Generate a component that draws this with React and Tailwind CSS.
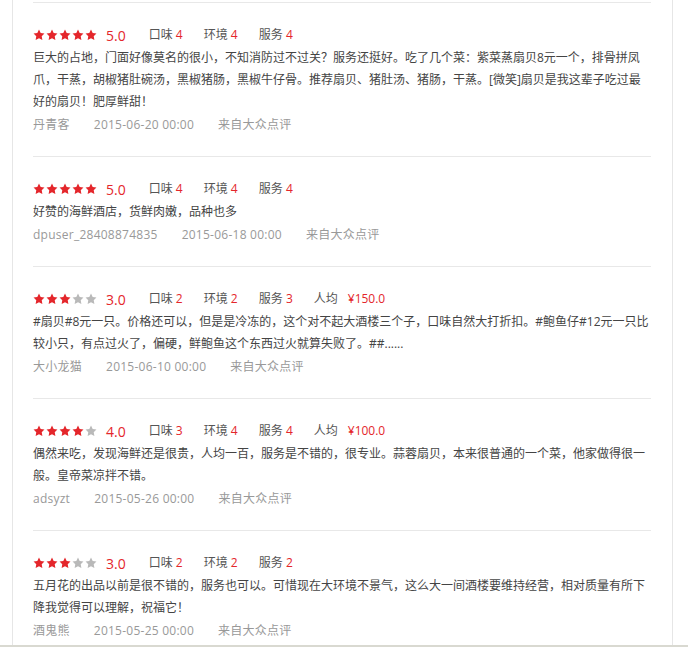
import React from "react";

const reviews = [
  {
    score: 5,
    taste: 4,
    env: 4,
    service: 4,
    price: null,
    text: "巨大的占地，门面好像莫名的很小，不知消防过不过关？服务还挺好。吃了几个菜：紫菜蒸扇贝8元一个，排骨拼凤爪，干蒸，胡椒猪肚碗汤，黑椒猪肠，黑椒牛仔骨。推荐扇贝、猪肚汤、猪肠，干蒸。[微笑]扇贝是我这辈子吃过最好的扇贝！肥厚鲜甜！",
    user: "丹青客",
    date: "2015-06-20 00:00",
  },
  {
    score: 5,
    taste: 4,
    env: 4,
    service: 4,
    price: null,
    text: "好赞的海鲜酒店，货鲜肉嫩，品种也多",
    user: "dpuser_28408874835",
    date: "2015-06-18 00:00",
  },
  {
    score: 3,
    taste: 2,
    env: 2,
    service: 3,
    price: "¥150.0",
    text: "#扇贝#8元一只。价格还可以，但是是冷冻的，这个对不起大酒楼三个子，口味自然大打折扣。#鲍鱼仔#12元一只比较小只，有点过火了，偏硬，鲜鲍鱼这个东西过火就算失败了。##......",
    user: "大小龙猫",
    date: "2015-06-10 00:00",
  },
  {
    score: 4,
    taste: 3,
    env: 4,
    service: 4,
    price: "¥100.0",
    text: "偶然来吃，发现海鲜还是很贵，人均一百，服务是不错的，很专业。蒜蓉扇贝，本来很普通的一个菜，他家做得很一般。皇帝菜凉拌不错。",
    user: "adsyzt",
    date: "2015-05-26 00:00",
  },
  {
    score: 3,
    taste: 2,
    env: 2,
    service: 2,
    price: null,
    text: "五月花的出品以前是很不错的，服务也可以。可惜现在大环境不景气，这么大一间酒楼要维持经营，相对质量有所下降我觉得可以理解，祝福它！",
    user: "酒鬼熊",
    date: "2015-05-25 00:00",
  },
];

function Star({ on }) {
  return (
    <svg viewBox="1 1 22 22" className={`w-[12px] h-[12px] ${on ? "fill-[#e4262b]" : "fill-[#b9b9b9]"}`}>
      <path d="M12 2l3.09 6.26L22 9.27l-5 4.87 1.18 6.88L12 17.77l-6.18 3.25L7 14.14 2 9.27l6.91-1.01L12 2z" />
    </svg>
  );
}

function Score({ label, value }) {
  return (
    <span className="mr-[21px] text-[#555]">
      {label} <span className="text-[#e4262b]">{value}</span>
    </span>
  );
}

function Review({ r }) {
  return (
    <div className="border-t border-[#e8e8e8] pt-[21px] pb-[20px]">
      <div className="flex items-center h-[22px] text-[12px]">
        <div className="flex gap-[1px]">
          {[1, 2, 3, 4, 5].map((i) => (
            <Star key={i} on={i <= r.score} />
          ))}
        </div>
        <span className="ml-[9px] mr-[23px] text-[14px] text-[#e4262b]">{r.score}.0</span>
        <Score label="口味" value={r.taste} />
        <Score label="环境" value={r.env} />
        <Score label="服务" value={r.service} />
        {r.price && (
          <span className="text-[#555]">
            人均<span className="ml-[10px] text-[#e4262b]">{r.price}</span>
          </span>
        )}
      </div>
      <p className="mt-[1px] text-[12px] leading-[22px] text-[#444]">{r.text}</p>
      <div className="mt-[1px] flex gap-[24px] text-[12px] leading-[22px] tracking-[0.25px] text-[#999]">
        <span>{r.user}</span>
        <span>{r.date}</span>
        <span>来自大众点评</span>
      </div>
    </div>
  );
}

export default function App() {
  return (
    <div
      className="h-[647px] overflow-hidden bg-white border-b-2 border-[#d9d9d1]"
      style={{ fontFamily: '"Open Sans", "Noto Sans CJK SC", sans-serif' }}
    >
      <div className="ml-[12px] w-[661px] h-full border-x border-[#e6e6e6] pl-[20px] pr-[21px] pt-[2px]">
        <div className="w-[618px]">
          {reviews.map((r, i) => (
            <Review key={i} r={r} />
          ))}
        </div>
      </div>
    </div>
  );
}
